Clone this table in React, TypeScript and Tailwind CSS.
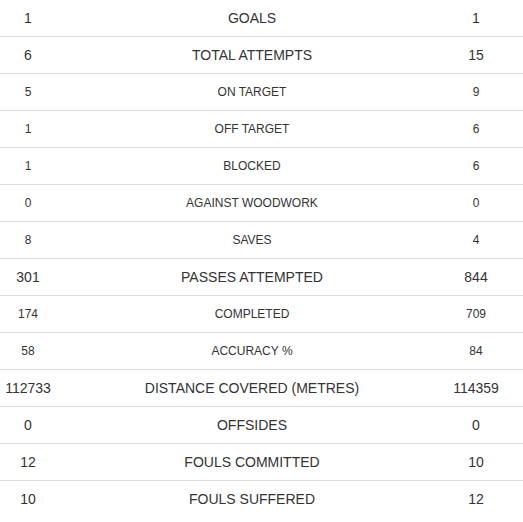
import React from "react";

type Row = { l: string; label: string; r: string; small?: boolean };

const rows: Row[] = [
  { l: "1", label: "GOALS", r: "1" },
  { l: "6", label: "TOTAL ATTEMPTS", r: "15" },
  { l: "5", label: "ON TARGET", r: "9", small: true },
  { l: "1", label: "OFF TARGET", r: "6", small: true },
  { l: "1", label: "BLOCKED", r: "6", small: true },
  { l: "0", label: "AGAINST WOODWORK", r: "0", small: true },
  { l: "8", label: "SAVES", r: "4", small: true },
  { l: "301", label: "PASSES ATTEMPTED", r: "844" },
  { l: "174", label: "COMPLETED", r: "709", small: true },
  { l: "58", label: "ACCURACY %", r: "84", small: true },
  { l: "112733", label: "DISTANCE COVERED (METRES)", r: "114359" },
  { l: "0", label: "OFFSIDES", r: "0" },
  { l: "12", label: "FOULS COMMITTED", r: "10" },
  { l: "10", label: "FOULS SUFFERED", r: "12" },
];

export default function App() {
  return (
    <div
      className="w-[523px] h-[522px] bg-white text-[#333333]"
      style={{ fontFamily: '"Liberation Sans", Arial, sans-serif' }}
    >
      {rows.map((row, i) => (
        <div
          key={i}
          className={
            "grid grid-cols-[56px_392px_56px_1fr] items-center h-[37px] " +
            (i < rows.length - 1 ? "border-b border-[#dddddd]" : "")
          }
        >
          <div className={"text-center " + (row.small ? "text-[12px]" : "text-[14px]")}>
            {row.l}
          </div>
          <div className={"text-center " + (row.small ? "text-[12px]" : "text-[14px]")}>
            {row.label}
          </div>
          <div className={"text-center " + (row.small ? "text-[12px]" : "text-[14px]")}>
            {row.r}
          </div>
          <div />
        </div>
      ))}
    </div>
  );
}
